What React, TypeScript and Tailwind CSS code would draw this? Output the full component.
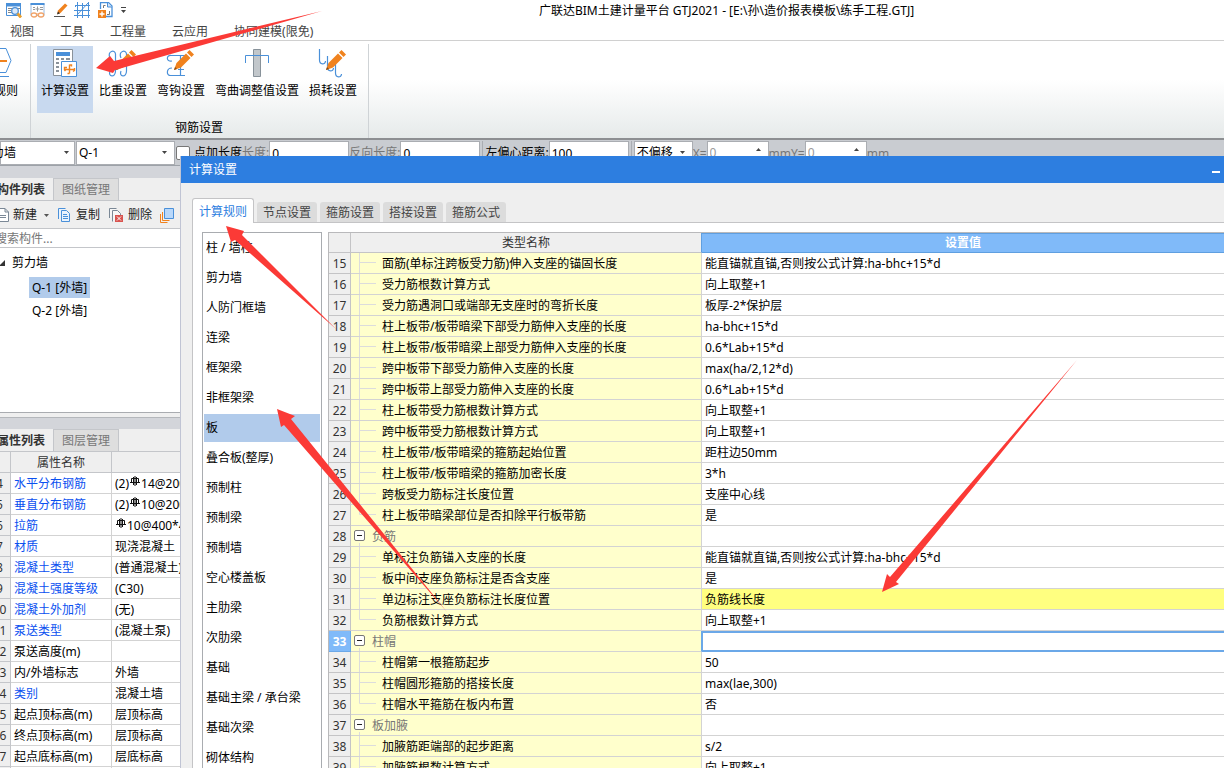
import React from 'react';
import type { ReactNode } from 'react';

const BLUE = '#4a90d9';
const ORANGE = '#f0821e';

type RuleRow = { n: number; name: string; value: string; group?: boolean; last?: boolean };

const rules: RuleRow[] = [
  { n: 15, name: '面筋(单标注跨板受力筋)伸入支座的锚固长度', value: '能直锚就直锚,否则按公式计算:ha-bhc+15*d' },
  { n: 16, name: '受力筋根数计算方式', value: '向上取整+1' },
  { n: 17, name: '受力筋遇洞口或端部无支座时的弯折长度', value: '板厚-2*保护层' },
  { n: 18, name: '柱上板带/板带暗梁下部受力筋伸入支座的长度', value: 'ha-bhc+15*d' },
  { n: 19, name: '柱上板带/板带暗梁上部受力筋伸入支座的长度', value: '0.6*Lab+15*d' },
  { n: 20, name: '跨中板带下部受力筋伸入支座的长度', value: 'max(ha/2,12*d)' },
  { n: 21, name: '跨中板带上部受力筋伸入支座的长度', value: '0.6*Lab+15*d' },
  { n: 22, name: '柱上板带受力筋根数计算方式', value: '向上取整+1' },
  { n: 23, name: '跨中板带受力筋根数计算方式', value: '向上取整+1' },
  { n: 24, name: '柱上板带/板带暗梁的箍筋起始位置', value: '距柱边50mm' },
  { n: 25, name: '柱上板带/板带暗梁的箍筋加密长度', value: '3*h' },
  { n: 26, name: '跨板受力筋标注长度位置', value: '支座中心线' },
  { n: 27, name: '柱上板带暗梁部位是否扣除平行板带筋', value: '是', last: true },
  { n: 28, name: '负筋', value: '', group: true },
  { n: 29, name: '单标注负筋锚入支座的长度', value: '能直锚就直锚,否则按公式计算:ha-bhc+15*d' },
  { n: 30, name: '板中间支座负筋标注是否含支座', value: '是' },
  { n: 31, name: '单边标注支座负筋标注长度位置', value: '负筋线长度' },
  { n: 32, name: '负筋根数计算方式', value: '向上取整+1', last: true },
  { n: 33, name: '柱帽', value: '', group: true },
  { n: 34, name: '柱帽第一根箍筋起步', value: '50' },
  { n: 35, name: '柱帽圆形箍筋的搭接长度', value: 'max(lae,300)' },
  { n: 36, name: '柱帽水平箍筋在板内布置', value: '否', last: true },
  { n: 37, name: '板加腋', value: '', group: true },
  { n: 38, name: '加腋筋距端部的起步距离', value: 's/2' },
  { n: 39, name: '加腋筋根数计算方式', value: '向上取整+1' },
];

const categories = [
  '柱 / 墙柱', '剪力墙', '人防门框墙', '连梁', '框架梁', '非框架梁', '板', '叠合板(整厚)', '预制柱',
  '预制梁', '预制墙', '空心楼盖板', '主肋梁', '次肋梁', '基础', '基础主梁 / 承台梁', '基础次梁', '砌体结构',
];

function Rebar() {
  return (
    <svg className="mx-px mb-[2px] inline-block align-baseline" width="10" height="10" viewBox="0 0 10 10" fill="none" stroke="#111" aria-hidden="true">
      <path d="M5 0v10M1.500 2.500h7M1.500 2.500v4M8.500 2.500v4M0 6.500h10M3.500 1v8M6.500 1v8" />
    </svg>
  );
}

const properties: { n: number; name: string; value: ReactNode; blue?: boolean }[] = [
  { n: 4, name: '水平分布钢筋', value: <>(2)<Rebar />14@200</>, blue: true },
  { n: 5, name: '垂直分布钢筋', value: <>(2)<Rebar />10@200</>, blue: true },
  { n: 6, name: '拉筋', value: <><Rebar />10@400*400</>, blue: true },
  { n: 7, name: '材质', value: '现浇混凝土', blue: true },
  { n: 8, name: '混凝土类型', value: '(普通混凝土)', blue: true },
  { n: 9, name: '混凝土强度等级', value: '(C30)', blue: true },
  { n: 10, name: '混凝土外加剂', value: '(无)', blue: true },
  { n: 11, name: '泵送类型', value: '(混凝土泵)', blue: true },
  { n: 12, name: '泵送高度(m)', value: '' },
  { n: 13, name: '内/外墙标志', value: '外墙' },
  { n: 14, name: '类别', value: '混凝土墙', blue: true },
  { n: 15, name: '起点顶标高(m)', value: '层顶标高' },
  { n: 16, name: '终点顶标高(m)', value: '层顶标高' },
  { n: 17, name: '起点底标高(m)', value: '层底标高' },
  { n: 18, name: '终点底标高(m)', value: '层底标高' },
];

function Pencil() {
  return (
    <g>
      <path d="M0 20l2.500-7L12 3.500l4.500 4.500L7 17.500z" fill={ORANGE} />
      <path d="M13 2.500L15.500 0 20 4.500 17.500 7z" fill={ORANGE} />
      <path d="M0 20l1-3 2 2z" fill="#8a4a10" />
    </g>
  );
}

function QuickIcons() {
  return (
    <div className="flex items-center">
      <button aria-label="查看" className="w-6">
        <svg width="17" height="16" viewBox="0 0 17 16" fill="none">
          <path d="M.5 1.500h14v12H.5z" stroke={BLUE} fill="#fff" />
          <path d="M0 1h15v3.500H0z" fill={BLUE} />
          <path d="M2 6.500h4M2 8.500h3M2 10.500h4M11 6.500h3" stroke="#888" />
          <circle cx="9" cy="9" r="3.300" stroke={BLUE} strokeWidth="1.300" fill="#dce9f8" />
          <path d="M11.500 11.500l3.500 4" stroke="#e8a030" strokeWidth="2.800" />
        </svg>
      </button>
      <button aria-label="审阅" className="w-6">
        <svg width="16" height="16" viewBox="0 0 16 16" fill="none">
          <path d="M1 1.500h13v12H1z" stroke="#9ab9dd" fill="#fff" />
          <path d="M.5 1h14v2H.5z" fill={BLUE} />
          <path d="M3 5.500h2M10 5.500h3M3 7.500h2M10 7.500h3M7.500 4.500v5M5.500 7h4" stroke="#999" />
          <ellipse cx="4" cy="13" rx="2.700" ry="2" stroke="#f0a36a" strokeWidth="1.300" fill="#fff" />
          <ellipse cx="11" cy="13" rx="2.700" ry="2" stroke="#f0a36a" strokeWidth="1.300" fill="#fff" />
          <path d="M6.500 12h2" stroke="#f0a36a" />
        </svg>
      </button>
      <button aria-label="绘制" className="w-5">
        <svg width="14" height="16" viewBox="0 0 14 16" fill="none">
          <path d="M0 14.500h11" stroke="#555" />
          <path d="M3 12l1-3.500L11 1.500l2.500 2-7 7.500z" fill={ORANGE} />
          <path d="M3 12.500l1-3 2 2z" fill="#333" />
        </svg>
      </button>
      <button aria-label="轴网" className="w-6">
        <svg width="17" height="16" viewBox="0 0 17 16" fill="none" stroke={BLUE}>
          <path d="M3.500 0v16M8.500 1v15M14.500 0v16M1 3.500h15M0 8.500h16M0 13.500h16M14 1L3 13M4 2L1 5" />
        </svg>
      </button>
      <button aria-label="新建模型" className="w-[22px]">
        <svg width="15" height="16" viewBox="0 0 15 16" fill="none">
          <path d="M2.500 7V.5h8L14 4v10.500H8" stroke={BLUE} strokeWidth="1.300" />
          <path d="M9.500 1v4H14" stroke={BLUE} fill="#cfe0f5" />
          <path d="M5.500 6v-2.500h2M11.500 9v3.500H9" stroke="#777" />
          <path d="M0 8h8v8H0z" fill={ORANGE} />
          <path d="M4 9.500v5M1.500 12h5" stroke="#fff" strokeWidth="1.400" />
        </svg>
      </button>
      <button aria-label="更多">
        <svg width="7" height="7" viewBox="0 0 7 7">
          <path d="M1 0h5v1H1zM1 3h5L3.500 6z" fill="#444" />
        </svg>
      </button>
    </div>
  );
}

function RibbonButton({ label, active, children }: { label: string; active?: boolean; children: ReactNode }) {
  return (
    <button className={`flex h-[67px] flex-col items-center px-1 pt-[2px] ${active ? 'bg-[#c8d9ef]' : ''}`}>
      <svg width="32" height="32" viewBox="0 0 32 32" fill="none" aria-hidden="true">{children}</svg>
      <span className="mt-[3px] leading-4 text-black">{label}</span>
    </button>
  );
}

function Ribbon() {
  return (
    <div className="flex h-[97px] shrink-0 bg-linear-to-b from-white from-40% to-[#e6eaea] pt-[3px]">
      <div className="flex w-[30px] shrink-0 pt-[2px]">
        <button className="-ml-[18px] flex h-[67px] flex-col items-center pt-[2px]">
          <svg width="32" height="32" viewBox="0 0 32 32" fill="none" aria-hidden="true">
            <path d="M7 .5h15l5 12-5 12H7l-5-12z" stroke={BLUE} fill="#fff" />
            <path d="M12 13h11" stroke={ORANGE} strokeWidth="2" />
            <path d="M4 28.500h21" stroke={BLUE} />
          </svg>
          <span className="mt-[3px] whitespace-nowrap leading-4 text-black">计规则</span>
        </button>
      </div>
      <div className="flex flex-col border-x border-[#cfd3d6] pt-[2px] pl-[6px] pr-[7px]">
        <div className="flex gap-[2px]">
          <RibbonButton label="计算设置" active>
            <path d="M4.500 1.500h19v26h-19z" stroke="#8a929a" fill="#fff" />
            <path d="M7 4h14v4H7z" fill={BLUE} />
            <path d="M7 10h3v2H7zM12 10h3v2h-3zM17 10h4v2h-4zM7 14h3v2H7zM12 14h3v2h-3zM7 18h3v2H7zM7 22h3v2H7z" fill="#8a929a" />
            <path d="M12.500 13.500h15v15h-15z" stroke={BLUE} fill="#fff" />
            <path d="M20.500 16.500v9M16 21.500h9.500M20.500 17h2v1.500M18 19.500h-2.500v2.500l1 1M25.500 20v2.500l-1.500 1M18.500 25.500h2" stroke={ORANGE} strokeWidth="1.400" />
          </RibbonButton>
          <RibbonButton label="比重设置">
            <path d="M3 10c-3-7 5-9 5.500-4v17c0 7-8 6-5.500 0M14 10c-3-7 5-9 5.500-4v17c0 7-8 6-5.500 0" stroke={BLUE} strokeWidth="1.200" />
            <g transform="translate(9 2)"><Pencil /></g>
          </RibbonButton>
          <RibbonButton label="弯钩设置">
            <path d="M7 13c-6 1-6-6-1-5.500h15M7 20c-6 0-6 8-1 7.500h14M15.500 8v19M13 21.500h6" stroke={BLUE} strokeWidth="1.200" />
            <g transform="translate(9 2)"><Pencil /></g>
          </RibbonButton>
          <RibbonButton label="弯曲调整值设置">
            <path d="M12.500 1.500h7v27h-7z" fill="#c2c7cb" stroke="#88929a" />
            <path d="M4.500 15V7.500h23V15" stroke={BLUE} />
          </RibbonButton>
          <RibbonButton label="损耗设置">
            <path d="M2.500 1v11c0 5 6 5 6 1M10.500 8v11c0 5 6 5 6 1M18.500 14v11c0 5 6 5 6 1" stroke={BLUE} strokeWidth="1.200" />
            <g transform="translate(9 2)"><Pencil /></g>
          </RibbonButton>
        </div>
        <div className="mt-[7px] text-center leading-4 text-black">钢筋设置</div>
      </div>
    </div>
  );
}

function Caret({ up }: { up?: boolean }) {
  return (
    <svg className="pointer-events-none -ml-3 mr-[5px] shrink-0" width="5" height="3" viewBox="0 0 5 3" aria-hidden="true">
      <path d={up ? 'M0 3h5L2.500 0z' : 'M0 0h5L2.500 3z'} fill="#444" />
    </svg>
  );
}

function Spinner({ label, id }: { label: string; id: string }) {
  return (
    <div className="flex items-center">
      <label htmlFor={id} className="pt-[2px] text-[#777]">{label}</label>
      <div className="flex h-6 w-[62px] items-start border border-[#aaadb2] bg-white">
        <input id={id} defaultValue="0" className="h-[22px] w-full min-w-0 px-[2px] text-[#999] outline-none" />
        <span className="flex pt-[6px]"><Caret up /></span>
      </div>
    </div>
  );
}

const field = 'h-6 w-20 border border-[#aaadb2] bg-white px-[2px] pt-px text-black outline-none';

function OptionBar() {
  return (
    <div className="flex h-7 shrink-0 items-center whitespace-nowrap border-t-2 border-b border-t-[#8d8f92] border-b-[#9da2a8] bg-[#c9ccd1]">
      <div className="flex h-6 w-[75px] shrink-0 items-center border border-[#aaadb2] bg-white">
        <select aria-label="构件类型" className="-ml-[21px] h-[22px] flex-1 appearance-none pt-px text-black outline-none">
          <option>剪力墙</option>
        </select>
        <Caret />
      </div>
      <div className="ml-px flex h-6 w-[99px] shrink-0 items-center border border-[#aaadb2] bg-white">
        <select aria-label="构件" className="h-[22px] w-full appearance-none px-[2px] pt-px text-black outline-none">
          <option>Q-1</option>
        </select>
        <Caret />
      </div>
      <label className="ml-px flex items-center gap-1 pt-px text-black">
        <input type="checkbox" className="size-[14px] appearance-none rounded-[2px] border border-[#777] bg-white" />
        点加长度
      </label>
      <label htmlFor="len" className="pt-px text-[#777]">长度:</label>
      <input id="len" defaultValue="0" className={field} />
      <label htmlFor="rev" className="pt-px text-[#777]">反向长度:</label>
      <input id="rev" defaultValue="0" className={field} />
      <div className="mx-[2px] h-6 border-l border-[#aaadb2]" />
      <label htmlFor="ecc" className="pt-px text-black">左偏心距离:</label>
      <input id="ecc" defaultValue="100" className={field} />
      <div className="mx-[2px] h-6 border-l border-[#aaadb2]" />
      <div className="flex h-6 w-[59px] items-center border border-[#aaadb2] bg-white">
        <select aria-label="偏移方式" className="h-[22px] w-full appearance-none px-[2px] pt-px text-black outline-none">
          <option>不偏移</option>
        </select>
        <Caret />
      </div>
      <Spinner label="X=" id="sx" />
      <Spinner label="mmY=" id="sy" />
      <span className="pt-[2px] text-[#777]">mm</span>
    </div>
  );
}

function PanelTabs({ first, second }: { first: string; second: string }) {
  return (
    <div className="flex h-[23px] shrink-0 whitespace-nowrap border-b border-[#c4c6ca] bg-[#efefef]">
      <button className="-ml-[3px] w-14 pt-px pr-2 text-center font-bold text-[#333]">{first}</button>
      <button className="w-[66px] border-x border-t border-[#c4c6ca] bg-[#dedede] pt-px text-[#777]">{second}</button>
    </div>
  );
}

function SidePanel() {
  return (
    <aside className="flex min-h-0 w-[180px] flex-1 flex-col overflow-hidden whitespace-nowrap bg-[#efefef]">
      <div className="h-3 shrink-0 bg-[#d3d5da]" />
      <PanelTabs first="构件列表" second="图纸管理" />
      <div className="flex h-7 shrink-0 items-center border-b border-[#c4c6ca] pt-px text-[#222]">
        <button className="flex items-center">
          <svg className="mr-1" width="9" height="14" viewBox="0 0 9 14" fill="#fff" stroke="#7b8896"><path d="M-3 .5h8l3.500 3.500v9.500H-3zM5 .5V4h3.500M0 7.500h6M0 9.500h6" /></svg>
          新建
          <svg className="ml-[7px]" width="5" height="3" viewBox="0 0 5 3"><path d="M0 0h5L2.500 3z" fill="#555" /></svg>
        </button>
        <button className="ml-[9px] flex items-center">
          <svg className="mr-[6px]" width="12" height="14" viewBox="0 0 12 14" fill="#eaf3fd" stroke={BLUE}><path d="M.5 11V.5h7M3.500 2.500h5l3 3v8h-8zM5 6.500h4M5 8.500h5M5 10.500h5" /></svg>
          复制
        </button>
        <button className="ml-[9px] flex items-center">
          <svg className="mr-[5px]" width="14" height="14" viewBox="0 0 14 14" fill="#f7f7f7" stroke="#7b8896"><path d="M.5 10V.5h7M3.500 13.500v-11h5l3 3v3" /><path d="M6 7h8v7H6z" fill="#d9534f" stroke="none" /><path d="M8 8.500l4 4M12 8.500l-4 4" stroke="#fff" /></svg>
          删除
        </button>
        <button aria-label="层间复制" className="ml-2">
          <svg width="14" height="15" viewBox="0 0 14 15" fill="none"><path d="M.5 6v8.500h7M2.500 4v8.500h7" stroke={ORANGE} /><path d="M4.500.5h9v10h-9z" fill="#b9d8fa" stroke={BLUE} /></svg>
        </button>
      </div>
      <input aria-label="搜索构件" placeholder="搜索构件..." className="-ml-[7px] h-[19px] shrink-0 border-b border-[#c4c6ca] bg-white px-[2px] outline-none placeholder:text-[#777]" />
      <div className="h-[165px] shrink-0 border-b border-[#a9acb0] bg-white pt-[3px] leading-6 text-black">
        <div className="flex items-center">
          <svg className="mr-[7px]" width="5" height="6" viewBox="0 0 5 6"><path d="M5 0v6H-1z" fill="#333" /></svg>
          剪力墙
        </div>
        <div className="flex h-6 items-center pl-[29px]"><span className="bg-[#b1cbeb] px-[3px] leading-[21px]">Q-1 [外墙]</span></div>
        <div className="flex h-6 items-center pl-8">Q-2 [外墙]</div>
      </div>
      <div className="mt-1 h-3 shrink-0 border-t border-[#b4b7bb] bg-[#d3d5da]" />
      <PanelTabs first="属性列表" second="图层管理" />
      <div className="-ml-[11px]">
        <table className="w-[240px] table-fixed border-separate border-spacing-0 bg-white">
          <colgroup><col className="w-[22px]" /><col className="w-[101px]" /><col /></colgroup>
          <thead>
            <tr className="h-[21px] bg-[#efefef] text-[#333]">
              <th className="border-r border-b border-[#c4c6ca] p-0" />
              <th className="border-r border-b border-[#c4c6ca] p-0 pt-px font-normal">属性名称</th>
              <th className="border-b border-[#c4c6ca] p-0" />
            </tr>
          </thead>
          <tbody>
            {properties.map((p) => (
              <tr key={p.n} className="h-[21px]">
                <td className="border-r border-b border-[#c4c6ca] bg-[#efefef] p-0 pt-px text-center text-[#333]">{p.n}</td>
                <td className={`border-r border-b border-[#d3d3d3] p-0 pt-px pl-[3px] ${p.blue ? 'text-[#0a50f0]' : 'text-black'}`}>{p.name}</td>
                <td className="overflow-hidden border-b border-[#d3d3d3] p-0 pt-px pl-[3px] text-black">{p.value}</td>
              </tr>
            ))}
          </tbody>
        </table>
      </div>
    </aside>
  );
}

function NameCell({ row }: { row: RuleRow }) {
  if (row.group) {
    return (
      <div className="flex h-5 items-center pl-[3px] text-[#777]">
        <svg className="mr-[7px]" width="11" height="20" viewBox="0 0 11 20" fill="none" aria-hidden="true">
          <rect x=".5" y="4.500" width="10" height="10" rx="1.500" fill="#fff" stroke="#777" />
          <path d="M3 9.500h5" stroke="#222" />
          <path d="M5.500 17v3" stroke="#dcdcdc" />
        </svg>
        <span className="pt-[2px]">{row.name}</span>
      </div>
    );
  }
  return (
    <div className="flex h-5 items-center pl-2 text-black">
      <svg className="mr-[6px]" width="17" height="20" viewBox="0 0 17 20" fill="none" stroke="#dcdcdc" aria-hidden="true">
        <path d={row.last ? 'M.5 0v9.500H17' : 'M.5 0v20M.5 9.500H17'} />
      </svg>
      <span className="pt-[2px]">{row.name}</span>
    </div>
  );
}

function RulesTable() {
  return (
    <table className="ml-[6px] flex-1 table-fixed border-separate border-spacing-0 self-start border-t border-l border-[#b9b9bb] bg-white">
      <colgroup><col className="w-[22px]" /><col className="w-[351px]" /><col /></colgroup>
      <thead>
        <tr className="h-5 bg-[#efefef] text-[#333]">
          <th className="border-r border-b border-[#c4c4c6] p-0" />
          <th className="border-r border-b border-[#c4c4c6] border-r-[#5f9fe0] p-0 pt-px font-normal">类型名称</th>
          <th className="border-y border-[#5f9fe0] bg-[#80baf9] p-0 pr-0 text-white">设置值</th>
        </tr>
      </thead>
      <tbody>
        {rules.map((r) => (
          <tr key={r.n} className="h-[21px]">
            <td className={`border-r border-b p-0 pt-px text-center ${r.n === 33 ? 'border-[#6ba8e8] bg-[#80baf9] font-bold text-white' : 'border-[#c4c4c6] bg-[#efefef] text-[#333]'}`}>{r.n}</td>
            <td className={`border-r border-b border-[#d3d3d3] bg-[#ffffcc] p-0 ${r.n === 33 ? 'border-r-[#6ba8e8]' : ''}`}><NameCell row={r} /></td>
            <td className={`p-0 pl-[3px] text-black ${r.n === 31 ? 'bg-[#ffff80]' : ''} ${r.n === 33 ? 'border-y-2 border-l border-[#6ba8e8]' : 'border-b border-[#d3d3d3] pt-px'}`}>{r.value}</td>
          </tr>
        ))}
      </tbody>
    </table>
  );
}

function SettingsDialog() {
  return (
    <section role="dialog" aria-label="计算设置" className="absolute top-[156px] right-0 bottom-0 left-[180px] flex flex-col overflow-hidden border-l border-[#c0c4d4] bg-[#efefef]">
      <header className="-ml-px flex h-[27px] shrink-0 items-center justify-between bg-[#2d7ee0] pr-1 pl-[9px] text-white">
        <h2>计算设置</h2>
        <button aria-label="最小化" className="mt-1 h-[2px] w-2 bg-white" />
      </header>
      <nav className="relative z-10 mt-[15px] -mb-px ml-[11px] flex h-[25px] shrink-0 items-end gap-[3px]">
        <button className="h-[25px] w-[62px] rounded-t-[3px] border border-b-0 border-[#c4c4c6] bg-white pt-px text-[#2d7ee0]">计算规则</button>
        {['节点设置', '箍筋设置', '搭接设置', '箍筋公式'].map((t) => (
          <button key={t} className="mb-px h-5 w-[60px] rounded-t-[3px] bg-[#dcdcdc] pt-px text-[#444]">{t}</button>
        ))}
      </nav>
      <div className="ml-[11px] flex min-h-0 flex-1 border-t border-l border-[#c4c4c6] bg-white pt-[9px] pl-[9px]">
        <ul className="w-[120px] shrink-0 border border-b-0 border-[#a9acb0] px-px text-black">
          {categories.map((c) => (
            <li key={c} className="flex h-[30px] flex-col py-px">
              <button className={`flex-1 pl-[2px] text-left ${c === '板' ? 'bg-[#b1cbeb]' : ''}`}>{c}</button>
            </li>
          ))}
        </ul>
        <RulesTable />
      </div>
    </section>
  );
}

function Arrows() {
  return (
    <svg className="pointer-events-none absolute top-0 left-0 z-20" width="1224" height="768" viewBox="0 0 1224 768" fill="#fb3a36" aria-hidden="true">
      <path d="M96 68L110 56 114 61 322 11 115 70 113 73z" />
      <path d="M226 226L244 231 242 235 336 329 235 240 231 242z" />
      <path d="M277 409L295 416 291 419 447 612 284 425 281 427z" />
      <path d="M882 592L887 574 890 577 1077 360 896 582 899 584z" />
    </svg>
  );
}

export default function App() {
  return (
    <div className="relative flex h-screen flex-col overflow-hidden bg-white font-['Noto_Sans','Noto_Sans_CJK_SC',sans-serif] text-[12px] leading-4">
      <header className="flex h-5 shrink-0 items-center whitespace-nowrap pl-[6px]">
        <QuickIcons />
        <h1 className="ml-[412px] pt-px text-black">广联达BIM土建计量平台 GTJ2021 - [E:\孙\造价报表模板\练手工程.GTJ]</h1>
      </header>
      <nav className="flex h-[21px] shrink-0 items-center gap-[26px] whitespace-nowrap border-b border-[#d0d0d0] pt-[3px] pl-[10px] text-[#444]">
        <button>视图</button>
        <button>工具</button>
        <button>工程量</button>
        <button>云应用</button>
        <button>协同建模(限免)</button>
      </nav>
      <Ribbon />
      <OptionBar />
      <SidePanel />
      <SettingsDialog />
      <Arrows />
    </div>
  );
}
